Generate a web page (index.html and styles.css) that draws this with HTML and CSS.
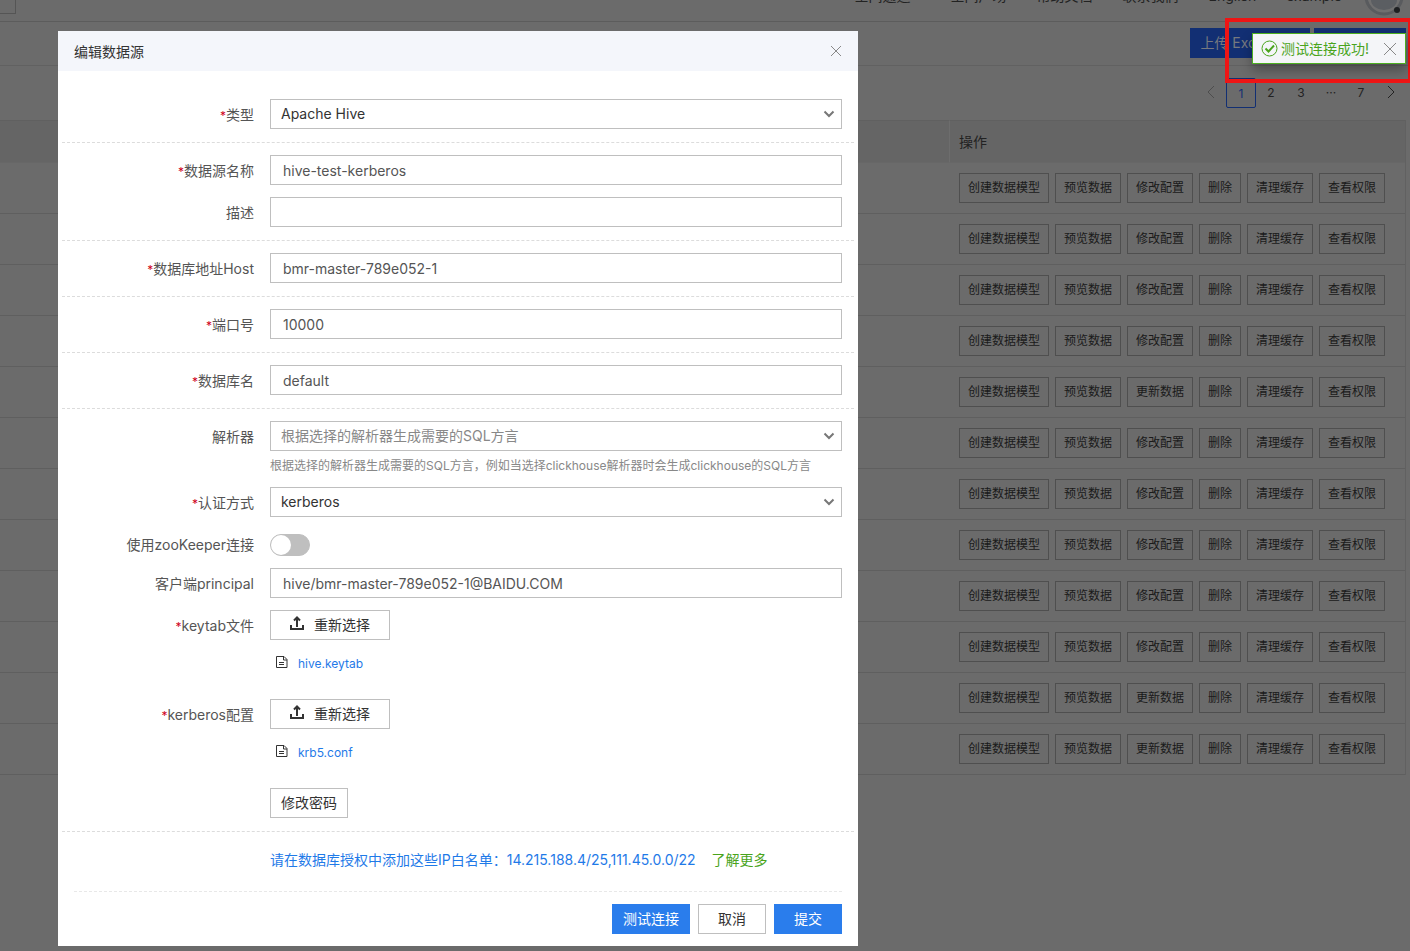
FILE: index.html
```html
<!DOCTYPE html>
<html lang="zh-CN">
<head>
<meta charset="utf-8">
<title>编辑数据源</title>
<link rel="stylesheet" href="styles.css">
</head>
<body>
<div class="page">
  <header class="topnav">
    <div class="topnav-switch"></div>
    <nav class="topnav-links">
      <a class="first" href="#">空间通道</a>
      <a href="#">空间广场</a>
      <a href="#">帮助文档</a>
      <a href="#">联系我们</a>
      <a href="#">English</a>
      <a href="#">example</a>
    </nav>
    <svg class="avatar" width="40" height="40" viewBox="0 0 40 40" aria-hidden="true">
      <circle cx="20" cy="20" r="18" fill="#6f6f6f" stroke="#595b5e" stroke-width="3"/>
      <path d="M7 24a13 10 0 0 0 26 0z" fill="#5b5e62"/>
      <circle cx="33" cy="34" r="3" fill="#1d1f21"/>
    </svg>
  </header>

  <div class="toolbar">
    <button class="tool" type="button">上传 Excel 文件</button>
    <button class="tool" type="button" aria-label="新建数据源"></button>
  </div>

  <nav class="pager">
    <button type="button" class="muted" aria-label="上一页"><svg width="10" height="14" viewBox="0 0 10 14"><path d="M8 1 2 7l6 6"/></svg></button>
    <button type="button" class="current">1</button>
    <button type="button">2</button>
    <button type="button">3</button>
    <button type="button">···</button>
    <button type="button">7</button>
    <button type="button" aria-label="下一页"><svg width="10" height="14" viewBox="0 0 10 14"><path d="m2 1 6 6-6 6"/></svg></button>
  </nav>

  <table class="sources">
    <thead><tr><th></th><th class="ops">操作</th></tr></thead>
    <tbody id="rows"></tbody>
  </table>
</div>

<div class="layer">
  <section class="dialog" role="dialog" aria-labelledby="title">
    <header class="dialog-head">
      <h1 id="title">编辑数据源</h1>
      <button class="close" type="button" aria-label="关闭"><svg width="12" height="12" viewBox="0 0 12 12"><path d="m1 1 10 10M11 1 1 11"/></svg></button>
    </header>

    <form class="form">
      <div class="group">
        <div class="row">
          <label for="type"><i>*</i>类型</label>
          <div class="select"><select id="type"><option>Apache Hive</option></select><svg width="12" height="8" viewBox="0 0 12 8"><path d="m1.5 1.5 4.5 4.5 4.5-4.5"/></svg></div>
        </div>
      </div>
      <div class="group">
        <div class="row"><label for="name"><i>*</i>数据源名称</label><input class="text" id="name" type="text" value="hive-test-kerberos"></div>
        <div class="row"><label for="desc">描述</label><input class="text" id="desc" type="text"></div>
      </div>
      <div class="group">
        <div class="row"><label for="host"><i>*</i>数据库地址Host</label><input class="text" id="host" type="text" value="bmr-master-789e052-1"></div>
      </div>
      <div class="group">
        <div class="row"><label for="port"><i>*</i>端口号</label><input class="text" id="port" type="text" value="10000"></div>
      </div>
      <div class="group">
        <div class="row"><label for="db"><i>*</i>数据库名</label><input class="text" id="db" type="text" value="default"></div>
      </div>
      <div class="group">
        <div class="row">
          <label for="parser">解析器</label>
          <div>
            <div class="select empty"><select id="parser"><option>根据选择的解析器生成需要的SQL方言</option></select><svg width="12" height="8" viewBox="0 0 12 8"><path d="m1.5 1.5 4.5 4.5 4.5-4.5"/></svg></div>
            <p class="hint">根据选择的解析器生成需要的SQL方言，例如当选择clickhouse解析器时会生成clickhouse的SQL方言</p>
          </div>
        </div>
        <div class="row">
          <label for="auth"><i>*</i>认证方式</label>
          <div class="select"><select id="auth"><option>kerberos</option></select><svg width="12" height="8" viewBox="0 0 12 8"><path d="m1.5 1.5 4.5 4.5 4.5-4.5"/></svg></div>
        </div>
        <div class="row">
          <label for="zk">使用zooKeeper连接</label>
          <input class="switch" id="zk" type="checkbox">
        </div>
        <div class="row"><label for="principal">客户端principal</label><input class="text" id="principal" type="text" value="hive/bmr-master-789e052-1@BAIDU.COM"></div>
        <div class="row">
          <label for="keytab"><i>*</i>keytab文件</label>
          <div>
            <button class="btn upload" id="keytab" type="button"><svg width="16" height="16" viewBox="0 0 16 16"><path d="M2 10v4h12v-4M8 12V3M5 5.500 8 2.500l3 3"/></svg>重新选择</button>
            <p class="file"><svg width="12" height="14" viewBox="0 0 12 14"><path d="M.5 1.5h7.500l3 3v8H.5zM7.500 1.500v3.500H11M3 7.500h5M3 9.500h5"/></svg><a href="#">hive.keytab</a></p>
          </div>
        </div>
        <div class="row">
          <label for="krb"><i>*</i>kerberos配置</label>
          <div>
            <button class="btn upload" id="krb" type="button"><svg width="16" height="16" viewBox="0 0 16 16"><path d="M2 10v4h12v-4M8 12V3M5 5.500 8 2.500l3 3"/></svg>重新选择</button>
            <p class="file"><svg width="12" height="14" viewBox="0 0 12 14"><path d="M.5 1.5h7.500l3 3v8H.5zM7.500 1.500v3.500H11M3 7.500h5M3 9.500h5"/></svg><a href="#">krb5.conf</a></p>
          </div>
        </div>
        <div class="row"><span></span><div><button class="btn" type="button">修改密码</button></div></div>
      </div>
      <p class="notice"><span>请在数据库授权中添加这些IP白名单：14.215.188.4/25,111.45.0.0/22</span><a href="#">了解更多</a></p>
    </form>

    <footer class="dialog-foot">
      <button class="btn primary" type="button">测试连接</button>
      <button class="btn wide" type="button">取消</button>
      <button class="btn primary wide" type="button">提交</button>
    </footer>
  </section>
</div>

<div class="highlight"></div>
<div class="toast" role="status">
  <svg width="17" height="17" viewBox="0 0 17 17"><circle cx="8.500" cy="8.500" r="7.500" stroke-width="1"/><path d="m4.500 8.500 3 3 5.500-6" stroke-width="2"/></svg>
  <span>测试连接成功!</span>
  <button class="close" type="button" aria-label="关闭提示"><svg width="14" height="14" viewBox="0 0 14 14"><path d="m1 1 12 12M13 1 1 13"/></svg></button>
</div>
<script src="rows.js"></script>
</body>
</html>
```
FILE: styles.css
```css
* { box-sizing: border-box; }

body {
  margin: 0;
  min-height: 100vh;
  overflow: hidden;
  background: #6b6b6b;
  color: #333;
  font: 14px/20px Inter, "Noto Sans CJK SC", sans-serif;
}

h1, p { margin: 0; font-size: 14px; font-weight: 400; }
button, input, select { font: inherit; color: inherit; border-radius: 0; margin: 0; }
a { color: inherit; text-decoration: none; }
svg { fill: none; stroke: currentColor; flex: none; }

/* Page behind the dialog */
.page { color: #222; }

.topnav {
  display: flex;
  justify-content: space-between;
  height: 22px;
  overflow: hidden;
  border-bottom: 1px solid #5c5c5c;
}
.topnav-switch {
  width: 16px;
  height: 14px;
  border: solid #555;
  border-width: 0 1px 1px 0;
}
.topnav-links {
  display: flex;
  gap: 30px;
  margin: -14px 22px 0 auto;
}
.topnav-links .first { margin-right: 10px; }
.avatar { margin: -24px 6px 0 0; stroke: none; }

.toolbar {
  display: flex;
  justify-content: flex-end;
  gap: 4px;
  padding: 6px 4px 7px;
  border-bottom: 1px solid #616161;
}
.tool {
  height: 30px;
  padding: 0 10px;
  border: 0;
  background: #122f73;
  color: #76797f;
  white-space: nowrap;
}
.tool:first-child { width: 120px; }
.tool:last-child { width: 92px; }

.pager {
  display: flex;
  justify-content: flex-end;
  padding: 12px 4px;
  font-size: 12px;
}
.pager button {
  width: 30px;
  height: 30px;
  padding: 0;
  border: 0;
  background: none;
}
.pager svg { vertical-align: middle; margin-bottom: 4px; }
.pager .muted { color: #4d4d4d; }
.pager .current { padding-top: 2px; border: 1px solid #122f73; border-radius: 2px; color: #122f73; }

.sources {
  width: calc(100% - 4px);
  border-collapse: separate;
  border-spacing: 0;
  border-right: 1px solid #616161;
}
.sources th, .sources td { padding: 10px; border-bottom: 1px solid #5f5f5f; }
.sources th {
  height: 43px;
  border-top: 1px solid #606060;
  border-bottom-color: #676767;
  background: #656565;
  text-align: left;
  font-weight: 400;
}
.sources .ops { width: 456px; border-left: 1px solid #6d6d6d; padding-left: 9px; }
.actions { display: flex; gap: 6px; }
.actions button {
  height: 30px;
  padding: 0 8px;
  border: 1px solid #4f4f4f;
  background: none;
  color: #1a1a1a;
  font-size: 12px;
  white-space: nowrap;
}

/* Dialog */
.layer { position: absolute; inset: 0; padding: 31px 58px 0; }
.dialog { width: 800px; max-width: 100%; background: #fff; }
.dialog-head {
  display: flex;
  align-items: center;
  justify-content: space-between;
  height: 40px;
  padding: 0 16px;
  background: #f4f6fb;
}
.dialog-head h1 { padding-top: 2px; }
.close {
  display: flex;
  padding: 0;
  border: 0;
  background: none;
  color: #888;
}

.form { padding: 16px 4px 0; }
.group {
  display: grid;
  gap: 12px;
  padding: 12px 12px 13px 0;
  border-bottom: 1px dashed #dcdcdc;
}
.row {
  display: grid;
  grid-template-columns: 192px minmax(0, 1fr);
  column-gap: 16px;
}
.row label { padding-top: 6px; text-align: right; color: #555; line-height: 20px; }
.row i { color: #d0021b; font-size: 12px; font-style: normal; line-height: 16px; }

.text, .select select {
  width: 100%;
  height: 30px;
  border: 1px solid #bfbfbf;
  background: #fff;
  outline: 0;
}
.text { padding: 0 12px; color: #555; }
.select { position: relative; height: 30px; }
.select select { appearance: none; padding: 0 30px 0 10px; color: #333; }
.select.empty select { color: #888; }
.select svg {
  position: absolute;
  right: 7px;
  top: 11px;
  color: #777;
  stroke-width: 2;
  pointer-events: none;
}
.hint { padding-top: 6px; font-size: 12px; line-height: 18px; color: #888; }

.switch {
  appearance: none;
  width: 40px;
  height: 22px;
  margin-top: 5px;
  border: 1px solid #bfbfbf;
  border-radius: 11px;
  background: #bfbfbf;
}
.switch::before {
  content: "";
  display: block;
  width: 20px;
  height: 20px;
  border-radius: 50%;
  background: #fff;
}
.row:has(.switch) { height: 27px; }

.btn {
  height: 30px;
  padding: 0 10px;
  border: 1px solid #bfbfbf;
  background: #fff;
  color: #333;
}
.row .btn { display: flex; align-items: center; }
.upload { width: 120px; gap: 9px; padding: 0 18px; }
.upload svg { stroke-width: 2; margin-bottom: 5px; }
.file {
  display: flex;
  align-items: center;
  gap: 10px;
  padding: 15px 6px 14px;
  font-size: 12px;
  line-height: 18px;
  color: #1f7ae8;
}
.file svg { color: #333; margin-bottom: 4px; }

.notice { display: flex; gap: 16px; padding: 18px 12px 21px 208px; color: #1f7ae8; }
.notice a { color: #4aa41c; }

.dialog-foot {
  display: flex;
  justify-content: flex-end;
  gap: 8px;
  margin: 0 16px;
  padding: 12px 0;
  border-top: 1px dashed #e8e8e8;
}
.primary { border-color: #2a7dec; background: #2a7dec; color: #fff; }
.wide { width: 68px; }

/* Success message and the frame drawn round it */
.highlight {
  position: absolute;
  top: 18px;
  right: -2px;
  width: 187px;
  height: 65px;
  border: 4px solid #ee1515;
}
.toast {
  position: absolute;
  top: 33px;
  right: 4px;
  display: flex;
  align-items: center;
  width: 154px;
  height: 31px;
  padding: 0 8px;
  border: 1px solid #4caf20;
  background: #f4f5f8;
  color: #4aa41c;
  box-shadow: 0 6px 12px rgba(0, 0, 0, .3);
}
.toast span { margin: 0 auto 0 3px; white-space: nowrap; }
```
FILE: rows.js
```js
const updatable = [4, 10, 11];
const body = document.getElementById("rows");

for (let i = 0; i < 12; i++) {
  const third = updatable.includes(i) ? "更新数据" : "修改配置";
  const names = ["创建数据模型", "预览数据", third, "删除", "清理缓存", "查看权限"];
  const buttons = names.map((n) => `<button type="button">${n}</button>`).join("");
  body.insertAdjacentHTML("beforeend", `<tr><td></td><td><div class="actions">${buttons}</div></td></tr>`);
}
```
